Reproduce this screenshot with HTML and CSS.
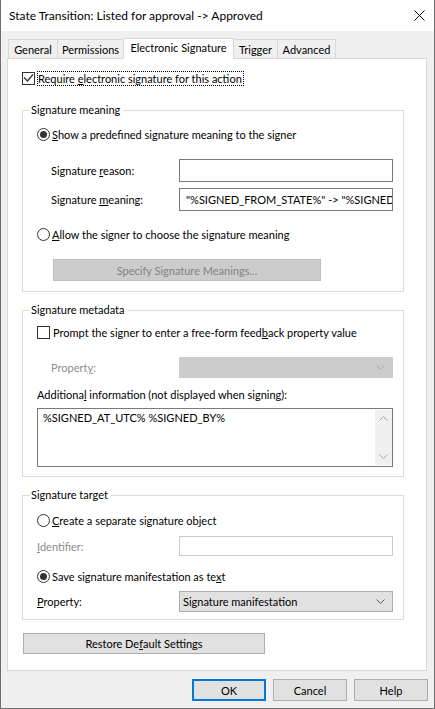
FILE: index.html
```html
<!DOCTYPE html>
<html lang="en">
<head>
<meta charset="utf-8">
<title>State Transition</title>
<link rel="stylesheet" href="styles.css">
</head>
<body>
<div class="window">
  <div class="titlebar">
    <span class="title">State Transition: Listed for approval -&gt; Approved</span>
    <svg class="close" width="11" height="11" viewBox="0 0 11 11"><path d="M0.5 0.5L10.5 10.5M10.5 0.5L0.5 10.5" stroke="#000" stroke-width="1" fill="none"/></svg>
  </div>

  <div class="tabs">
    <div class="tab tab-general">General</div>
    <div class="tab tab-perm">Permissions</div>
    <div class="tab tab-esig active">Electronic Signature</div>
    <div class="tab tab-trigger">Trigger</div>
    <div class="tab tab-adv">Advanced</div>
  </div>

  <div class="panel">
    <div class="check-row top-check">
      <span class="checkbox"><svg width="11" height="11" viewBox="0 0 11 11"><polyline points="1,4.5 4.5,8 10,1.5" fill="none" stroke="#333" stroke-width="1.3"/></svg></span>
      <span class="focus-label">Require <u>e</u>lectronic signature for this action</span>
    </div>

    <div class="group g1">
      <div class="legend">Signature meaning</div>
      <div class="radio-row r1"><span class="radio on"></span><span><u>S</u>how a predefined signature meaning to the signer</span></div>
      <div class="field-row f-reason"><span class="flabel">Signature <u>r</u>eason:</span><div class="edit"></div></div>
      <div class="field-row f-meaning"><span class="flabel">Signature <u>m</u>eaning:</span><div class="edit">"%SIGNED_FROM_STATE%" -&gt; "%SIGNED_TO_STATE%"</div></div>
      <div class="radio-row r2"><span class="radio"></span><span><u>A</u>llow the signer to choose the signature meaning</span></div>
      <div class="btn btn-disabled specify">Specify Signature Meanin<u>g</u>s...</div>
    </div>

    <div class="group g2">
      <div class="legend">Signature metadata</div>
      <div class="check-row prompt"><span class="checkbox"></span><span>Prompt the signer to enter a free-form feed<u>b</u>ack property value</span></div>
      <div class="field-row f-prop1"><span class="flabel disabled">Propert<u>y</u>:</span><div class="combo combo-disabled"><svg width="9" height="5" viewBox="0 0 9 5"><polyline points="0.5,0.5 4.5,4.5 8.5,0.5" fill="none" stroke="#a6a6a6" stroke-width="1"/></svg></div></div>
      <div class="info-label">Additiona<u>l</u> information (not displayed when signing):</div>
      <div class="textarea">
        <div class="ta-text">%SIGNED_AT_UTC% %SIGNED_BY%</div>
        <div class="scrollbar">
          <div class="sb-arrow"><svg width="9" height="5" viewBox="0 0 9 5"><polyline points="0.5,4.5 4.5,0.5 8.5,4.5" fill="none" stroke="#a6a6a6" stroke-width="1"/></svg></div>
          <div class="sb-arrow"><svg width="9" height="5" viewBox="0 0 9 5"><polyline points="0.5,0.5 4.5,4.5 8.5,0.5" fill="none" stroke="#a6a6a6" stroke-width="1"/></svg></div>
        </div>
      </div>
    </div>

    <div class="group g3">
      <div class="legend">Signature target</div>
      <div class="radio-row r3"><span class="radio"></span><span><u>C</u>reate a separate signature object</span></div>
      <div class="field-row f-ident"><span class="flabel flabel-flush disabled"><u>I</u>dentifier:</span><div class="edit edit-disabled"></div></div>
      <div class="radio-row r4"><span class="radio on"></span><span>Save signature manifestation as te<u>x</u>t</span></div>
      <div class="field-row f-prop2"><span class="flabel flabel-flush"><u>P</u>roperty:</span><div class="combo"><span class="combo-text">Signature manifestation</span><svg width="9" height="5" viewBox="0 0 9 5"><polyline points="0.5,0.5 4.5,4.5 8.5,0.5" fill="none" stroke="#555" stroke-width="1"/></svg></div></div>
    </div>

    <div class="btn restore">Restore De<u>f</u>ault Settings</div>
  </div>

  <div class="buttons">
    <div class="btn dlg-btn default">OK</div>
    <div class="btn dlg-btn">Cancel</div>
    <div class="btn dlg-btn">Help</div>
  </div>
</div>
</body>
</html>
```
FILE: styles.css
```css
* { box-sizing: border-box; }
html, body { margin: 0; padding: 0; }
body {
  font-family: Lato, "Liberation Sans", sans-serif;
  font-size: 11px;
  color: #000;
  background: #f0f0f0;
}
u { text-decoration: underline; text-underline-offset: 1px; }

.window {
  width: 435px;
  height: 709px;
  border: 1px solid #6e6e6e;
  border-top: none;
  background: #f0f0f0;
  display: flex;
  flex-direction: column;
}

/* title bar */
.titlebar {
  flex: none;
  height: 31px;
  background: #fff;
  display: flex;
  align-items: center;
  justify-content: space-between;
  padding: 0 9px 0 8px;
}
.title { font-size: 12px; line-height: 16px; }
.close { display: block; }

/* tabs */
.tabs {
  flex: none;
  display: flex;
  align-items: flex-start;
  height: 21px;
  margin: 7px 0 0 7px;
}
.tab {
  height: 19px;
  margin-top: 1px;
  margin-left: -1px;
  border: 1px solid #d9d9d9;
  border-bottom: none;
  background: #f0f0f0;
  text-align: center;
  line-height: 14px;
  padding-top: 3px;
  white-space: nowrap;
}
.tab-general { width: 50px; margin-left: 0; }
.tab-perm { width: 67px; }
.tab-esig { width: 111px; }
.tab-trigger { width: 45px; }
.tab-adv { width: 59px; }
.tab.active {
  height: 21px;
  margin-top: 0;
  background: #fff;
  line-height: 16px;
  padding-top: 1px;
  position: relative;
  z-index: 2;
}

/* panel */
.panel {
  flex: none;
  position: relative;
  z-index: 1;
  height: 613px;
  margin: -1px 7px 0 6px;
  background: #fff;
  border: 1px solid #d9d9d9;
  padding: 0 0 0 14px;
}

.check-row {
  display: flex;
  align-items: center;
  height: 16px;
  gap: 3px;
  white-space: nowrap;
}
.top-check { margin-top: 11px; gap: 2px; }
.prompt { margin-top: 6px; }
.checkbox {
  flex: none;
  width: 13px;
  height: 13px;
  border: 1px solid #333;
  background: #fff;
  display: block;
}
.checkbox svg { display: block; }
.focus-label {
  border: 1px dotted #000;
  line-height: 13px;
  padding: 0 1px 0 0;
}

/* groups */
.group {
  width: 382px;
  border: 1px solid #dcdcdc;
  padding: 0 10px 0 14px;
}
.legend {
  width: fit-content;
  margin: -9px 0 0 -7px;
  padding: 0 3px 0 1px;
  background: #fff;
  line-height: 16px;
}
.g1 { margin-top: 24px; padding-bottom: 10px; }
.g2 { margin-top: 18px; padding-bottom: 9px; }
.g3 { margin-top: 18px; padding-bottom: 7px; }

.radio-row {
  display: flex;
  align-items: center;
  height: 16px;
  gap: 2px;
  white-space: nowrap;
}
.radio {
  flex: none;
  width: 13px;
  height: 13px;
  border-radius: 50%;
  border: 1px solid #333;
  background: #fff;
  display: flex;
  align-items: center;
  justify-content: center;
}
.radio.on::after {
  content: "";
  width: 7px;
  height: 7px;
  border-radius: 50%;
  background: #333;
}
.r1 { margin-top: 8px; }
.r2 { margin-top: 15px; }
.r3 { margin-top: 9px; }
.r4 { margin-top: 12px; }

.field-row {
  display: grid;
  grid-template-columns: 142px 214px;
  align-items: center;
  white-space: nowrap;
}
.flabel { padding-left: 14px; }
.flabel-flush { padding-left: 0; }
.disabled { color: #8d8d8d; }

.f-reason { margin-top: 17px; }
.f-meaning { margin-top: 6px; }
.f-prop1 { margin-top: 17px; }
.f-ident { margin-top: 8px; }
.f-prop2 { margin-top: 7px; }

.edit {
  height: 23px;
  border: 1px solid #7a7a7a;
  background: #fff;
  padding: 0 6px;
  line-height: 21px;
  white-space: nowrap;
  overflow: hidden;
}
.edit-disabled { height: 20px; border-color: #cccccc; }

.combo {
  height: 21px;
  border: 1px solid #adadad;
  background: #e1e1e1;
  display: flex;
  align-items: center;
  justify-content: space-between;
  padding: 0 7px 0 3px;
}
.combo svg { display: block; }
.combo-disabled {
  justify-content: flex-end;
  background: #cccccc;
  border-color: #cccccc;
}

.info-label { margin-top: 9px; line-height: 16px; white-space: nowrap; }
.textarea {
  margin-top: 5px;
  height: 59px;
  border: 1px solid #7a7a7a;
  background: #fff;
  display: flex;
  padding: 1px 0 1px 1px;
}
.ta-text { flex: 1; padding: 0 4px; line-height: 16px; white-space: nowrap; }
.scrollbar {
  flex: none;
  width: 17px;
  background: #f0f0f0;
  display: flex;
  flex-direction: column;
  justify-content: space-between;
}
.sb-arrow {
  height: 17px;
  display: flex;
  align-items: center;
  justify-content: center;
}
.sb-arrow svg { display: block; }

/* buttons */
.btn {
  height: 22px;
  border: 1px solid #adadad;
  background: #e1e1e1;
  display: flex;
  align-items: center;
  justify-content: center;
  white-space: nowrap;
}
.specify {
  width: 268px;
  margin: 17px 0 0 16px;
}
.btn-disabled {
  background: #cccccc;
  border-color: #bfbfbf;
  color: #838383;
}
.restore {
  width: 242px;
  height: 21px;
  margin: 13px 0 0 1px;
}

.buttons {
  flex: none;
  display: flex;
  justify-content: flex-end;
  gap: 7px;
  margin-top: 8px;
  padding-right: 6px;
}
.dlg-btn { width: 74px; }
.default { border: 2px solid #0078d7; }
```
